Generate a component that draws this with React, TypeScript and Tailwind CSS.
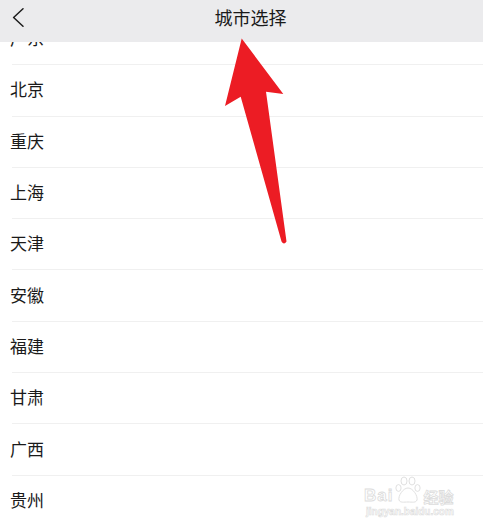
import React from 'react'

const cities = ['广东', '北京', '重庆', '上海', '天津', '安徽', '福建', '甘肃', '广西', '贵州']

export default function App() {
  return (
    <div
      className="relative w-[483px] h-[526px] overflow-hidden bg-white"
      style={{ fontFamily: '"Noto Sans CJK SC", "Liberation Sans", sans-serif' }}
    >
      {/* Header */}
      <div className="relative z-10 h-[42px] bg-[#ebebed] flex items-start">
        <div className="w-[40px] h-[34px] flex items-center pl-[12px]">
          <svg width="12" height="19" viewBox="0 0 12 19" fill="none">
            <path d="M11 0.8 L1.6 9.5 L11 18.2" stroke="#1c1c1c" strokeWidth="1.5" strokeLinecap="round" strokeLinejoin="round" />
          </svg>
        </div>
        <div className="flex-1 h-[34px] flex items-center justify-center pl-[18px] pr-[40px]">
          <span className="text-[18px] leading-none text-[#1a1a1a]">城市选择</span>
        </div>
      </div>

      {/* City list */}
      <div className="-mt-[28px]">
        {cities.map((city) => (
          <div key={city} className="h-[51.3px] flex flex-col">
            <div className="flex-1 flex items-center pl-[10px] pb-[3px]">
              <span className="text-[17px] leading-none text-[#1a1a1a]">{city}</span>
            </div>
            <div className="ml-[12px] h-px bg-[#f0f0f0]" />
          </div>
        ))}
      </div>

      {/* Red annotation arrow */}
      <svg className="absolute left-0 top-0 z-20" width="483" height="526" viewBox="0 0 483 526">
        <path
          d="M241.7 38.5 L283.3 94 L266 91.7 L286.5 241.5 Q284 245.5 281.5 241.5 L240.7 96.7 L225 106 Z"
          fill="#ec1c24"
        />
      </svg>

      {/* Watermark */}
      <div className="absolute left-[364px] top-[476px] flex flex-col items-start text-white [-webkit-text-stroke:0.8px_#dcdcdc]">
        <div className="flex items-end gap-[2px]">
          <span className="text-[17px] leading-none font-bold tracking-[1px]" style={{ fontFamily: '"Liberation Sans", sans-serif' }}>
            Bai
          </span>
          <svg width="26" height="28" viewBox="0 0 26 28" fill="none" stroke="#dcdcdc" strokeWidth="0.9">
            <ellipse cx="9" cy="5" rx="3" ry="4" />
            <ellipse cx="17" cy="5" rx="3" ry="4" />
            <ellipse cx="3.5" cy="12" rx="2.6" ry="3.4" />
            <ellipse cx="22.5" cy="12" rx="2.6" ry="3.4" />
            <path d="M13 12 C8 12 3 20 4 24 C5 27 9 26 13 26 C17 26 21 27 22 24 C23 20 18 12 13 12 Z" />
          </svg>
          <span className="text-[15px] leading-none font-bold">经验</span>
        </div>
        <span className="mt-[3px] ml-[2px] text-[10px] leading-none font-bold [-webkit-text-stroke:0.6px_#dcdcdc]" style={{ fontFamily: '"Liberation Sans", sans-serif' }}>
          jingyan.baidu.com
        </span>
      </div>
    </div>
  )
}
